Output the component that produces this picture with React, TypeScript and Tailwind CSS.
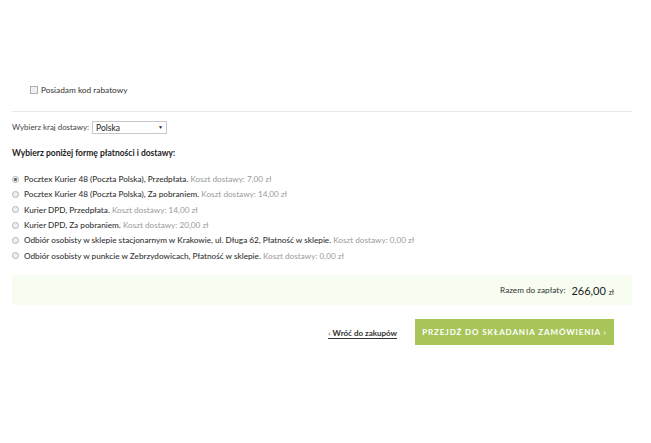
import React from "react";

const options = [
  { label: "Pocztex Kurier 48 (Poczta Polska), Przedpłata.", cost: "7,00 zł", checked: true },
  { label: "Pocztex Kurier 48 (Poczta Polska), Za pobraniem.", cost: "14,00 zł" },
  { label: "Kurier DPD, Przedpłata.", cost: "14,00 zł" },
  { label: "Kurier DPD, Za pobraniem.", cost: "20,00 zł" },
  { label: "Odbiór osobisty w sklepie stacjonarnym w Krakowie, ul. Długa 62, Płatność w sklepie.", cost: "0,00 zł" },
  { label: "Odbiór osobisty w punkcie w Zebrzydowicach, Płatność w sklepie.", cost: "0,00 zł" },
];

function Radio({ checked }: { checked?: boolean }) {
  return (
    <span className="w-[7px] h-[7px] rounded-full border border-[#b5b5b5] bg-[#eeeeee] flex items-center justify-center shrink-0">
      {checked && <span className="w-[3px] h-[3px] rounded-full bg-[#555]" />}
    </span>
  );
}

export default function App() {
  return (
    <div className="w-[651px] h-[443px] bg-white text-[#333] font-['Lato','Open_Sans',sans-serif] text-[8.2px] leading-none">
      <div className="pt-[86px] pl-[30px] flex items-center gap-[3px]">
        <span className="w-[8px] h-[8px] border border-[#b0b0b0] bg-[#f0f0f0]" />
        <span className="text-[8.3px]">Posiadam kod rabatowy</span>
      </div>
      <div className="mx-[12px] mt-[17px] w-[620px] h-px bg-[#eaeaea]" />
      <div className="mx-[12px] mt-[9px] flex items-center gap-[3px]">
        <span className="text-[7.9px] text-[#444]">Wybierz kraj dostawy:</span>
        <span className="w-[75px] h-[13px] border border-[#c8c8c8] bg-white flex items-center justify-between px-[3px] text-[8.5px] text-[#222]">
          <span>Polska</span>
          <span className="text-[5px]">▼</span>
        </span>
      </div>
      <div className="mx-[12px] mt-[15px] text-[8.5px] font-bold text-[#222]">
        Wybierz poniżej formę płatności i dostawy:
      </div>
      <div className="mx-[12px] mt-[17px] flex flex-col gap-[6.3px]">
        {options.map((o, i) => (
          <div key={i} className="flex items-center gap-[5px] h-[9px]">
            <Radio checked={o.checked} />
            <span className="whitespace-nowrap">
              <span className="text-[#333] font-medium">{o.label}</span>{" "}
              <span className="text-[#9a9a9a]">Koszt dostawy: {o.cost}</span>
            </span>
          </div>
        ))}
      </div>
      <div className="mx-[12px] mt-[15px] w-[620px] h-[30px] bg-[#f7fdf0] flex items-center justify-end pr-[18px] gap-[6px]">
        <span className="text-[8.2px] text-[#333]">Razem do zapłaty:</span>
        <span className="text-[11px] text-[#222]">
          266,00 <span className="text-[7px]">zł</span>
        </span>
      </div>
      <div className="mt-[14px] flex items-center justify-end pr-[37px] gap-[18px]">
        <span className="text-[8px] font-bold text-[#333] border-b border-[#333] pb-[1px] mt-[4px]">
          <span className="font-normal">‹ </span>Wróć do zakupów
        </span>
        <span className="w-[199px] h-[26px] bg-[#a8c55a] text-white font-bold text-[8px] tracking-[0.9px] whitespace-nowrap flex items-center justify-center">
          PRZEJDŹ DO SKŁADANIA ZAMÓWIENIA ›
        </span>
      </div>
    </div>
  );
}
